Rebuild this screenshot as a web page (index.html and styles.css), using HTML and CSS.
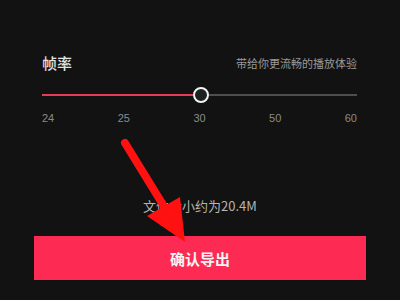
FILE: index.html
```html
<!DOCTYPE html>
<html lang="zh">
<head>
<meta charset="utf-8">
<link rel="stylesheet" href="styles.css">
</head>
<body>
<div class="screen">
  <div class="panel">
    <div class="header">
      <span class="title">帧率</span>
      <span class="hint">带给你更流畅的播放体验</span>
    </div>
    <div class="track">
      <div class="fill"></div>
      <div class="thumb"></div>
      <div class="rest"></div>
    </div>
    <div class="labels">
      <span>24</span><span>25</span><span>30</span><span>50</span><span>60</span>
    </div>
  </div>
  <div class="size">文件大小约为20.4M</div>
  <div class="button">确认导出</div>
  <svg class="arrow" width="400" height="300" viewBox="0 0 400 300">
    <line x1="125" y1="143" x2="165" y2="208" stroke="#ff1111" stroke-width="8" stroke-linecap="round"/>
    <polygon points="147,216 180,197 185,242" fill="#ff1111"/>
  </svg>
</div>
</body>
</html>
```
FILE: styles.css
```css
html, body {
  margin: 0;
  padding: 0;
  background: #121212;
}
.screen {
  position: relative;
  width: 400px;
  height: 300px;
  overflow: hidden;
  background: #121212;
  font-family: "Noto Sans CJK SC", "Noto Sans", sans-serif;
}
.panel {
  padding: 53px 43px 0 42px;
}
.header {
  display: flex;
  justify-content: space-between;
  align-items: center;
  height: 20px;
}
.title {
  font-size: 15px;
  font-weight: 500;
  color: #e2e2e2;
  line-height: 20px;
}
.hint {
  font-size: 11px;
  color: #9a9a9a;
  line-height: 14px;
}
.track {
  display: flex;
  align-items: center;
  height: 16px;
  margin-top: 14px;
}
.fill {
  width: 151px;
  height: 2px;
  background: #e23c58;
}
.thumb {
  width: 12px;
  height: 12px;
  border: 2px solid #f2f2f2;
  border-radius: 50%;
  background: #1b2222;
}
.rest {
  flex: 1;
  height: 2px;
  background: #4e4e4e;
}
.labels {
  display: flex;
  justify-content: space-between;
  margin-top: 8px;
  font-family: "Liberation Sans", sans-serif;
  font-size: 11px;
  line-height: 14px;
  color: #8a8a8a;
}
.size {
  margin-top: 72px;
  text-align: center;
  font-size: 13px;
  line-height: 18px;
  color: #b4b4b4;
}
.button {
  margin: 21px 34px 0 34px;
  height: 44px;
  background: #fd2a54;
  color: #f4f4f4;
  font-size: 15px;
  font-weight: 700;
  display: flex;
  align-items: center;
  justify-content: center;
}
.arrow {
  position: absolute;
  left: 0;
  top: 0;
}
```
